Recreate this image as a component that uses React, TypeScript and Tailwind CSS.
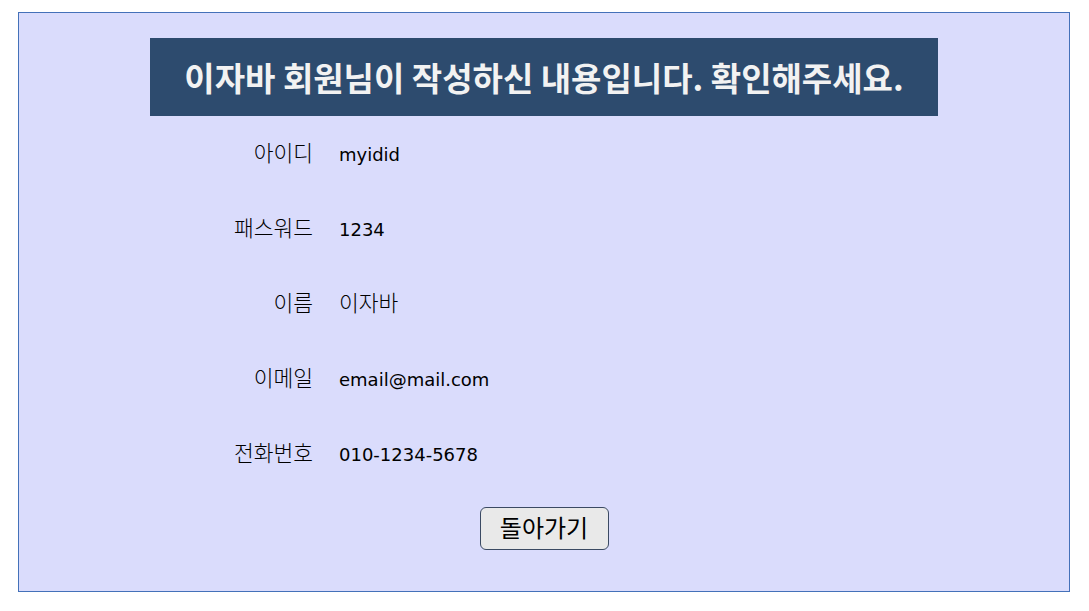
const rows: [string, string, boolean][] = [
    ["아이디", "myidid", false],
    ["패스워드", "1234", false],
    ["이름", "이자바", true],
    ["이메일", "email@mail.com", false],
    ["전화번호", "010-1234-5678", false],
];

const App = () => {
    return (
        <div className="pt-[12px] px-[18px] bg-white min-h-[611px]" style={{ fontFamily: '"DejaVu Sans", "Noto Sans CJK KR", sans-serif' }}>
            <div className="h-[580px] w-[1052px] border border-[#4471b9] bg-[#dadcfc] pt-[25px]">
                <div className="mx-auto w-[788px] h-[78px] bg-[#2d4b6e] flex items-center justify-center">
                    <h1 className="text-[33px] font-bold text-[#f2f2f2] leading-none" style={{ fontFamily: '"Noto Sans CJK KR", sans-serif' }}>이자바 회원님이 작성하신 내용입니다. 확인해주세요.</h1>
                </div>
                <div className="mx-auto w-[788px] mt-[1px]">
                    {rows.map(([label, value, korean]) => (
                        <div key={label} className="h-[75px] flex items-center text-black">
                            <span className="w-[163px] text-right text-[21.5px] font-light">{label}</span>
                            <span className={korean ? "ml-[26px] text-[21.5px] font-light" : "ml-[26px] text-[18px]"}>{value}</span>
                        </div>
                    ))}
                </div>
                <div className="flex justify-center mt-[15px]">
                    <button className="w-[129px] h-[43px] rounded-[6px] border border-[#3b4a63] bg-[#e9e9e9] text-[24px] leading-none text-black">돌아가기</button>
                </div>
            </div>
        </div>
    );
};

export default App;
